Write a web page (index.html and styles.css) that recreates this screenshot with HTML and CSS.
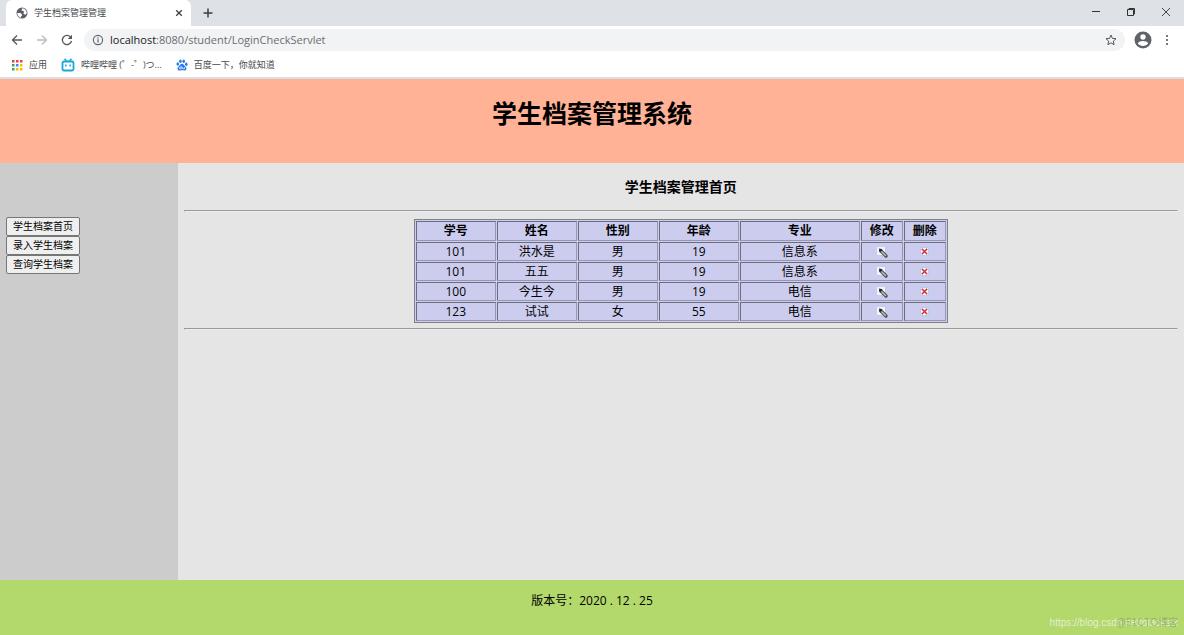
FILE: index.html
```html
<!DOCTYPE html>
<html lang="zh-CN">
<head>
<meta charset="utf-8">
<title>学生档案管理管理</title>
<link rel="stylesheet" href="styles.css">
</head>
<body>
<svg class="defs" aria-hidden="true">
  <symbol id="pencil" viewBox="0 0 12 12"><path d="M1 1h9v9H1z" fill="#edf3ff"/><path d="M1 9.500h8.500V1" fill="none" stroke="#b4cdf2"/><path d="M5 5l5 5" stroke="#444" stroke-width="3.200" stroke-linecap="round"/><path d="M5.500 5.500l4.500 4.500" stroke="#c4c3b4" stroke-width="1.500"/><path d="M3 2.500l3.500.7-3 3z" fill="#222"/></symbol>
  <symbol id="cross" viewBox="0 0 11 11"><path d="M1.500 1.500h8v8h-8z" fill="#f8faff" stroke="#b4cdf2"/><path d="M2.800 2.800l5.400 5.400M8.200 2.800L2.800 8.200" stroke="#d5303a" stroke-width="1.600"/></symbol>
</svg>
<div class="browser">
  <div class="tabs">
    <div class="tab">
      <svg class="icon12" viewBox="0 0 12 12"><circle cx="6" cy="6" r="5.500" fill="#5b5f65"/><path d="M1.300 6h3.200l1.500 1.500v1.200l-1 .5v1.500C3 10.500 1.300 8.500 1.300 6zM6.500 1.300l-.8 1.300v1.200h1.500l1 1.200-1 1.200 1.800 1.500 1-.5.8-1.200C10.700 3.500 9 1.500 6.500 1.300z" fill="#fff"/></svg>
      <span class="tab-title">学生档案管理管理</span>
      <button class="plain" aria-label="关闭标签页"><svg class="icon8" viewBox="0 0 8 8"><path d="M1.200 1.200l5.600 5.600M6.800 1.200L1.200 6.800" stroke="#3c4043" stroke-width="1.300"/></svg></button>
    </div>
    <button class="plain newtab" aria-label="新标签页"><svg class="icon12" viewBox="0 0 12 12"><path d="M6 1.500v9M1.500 6h9" stroke="#3c4043" stroke-width="1.500"/></svg></button>
    <div class="window-buttons">
      <button class="plain" aria-label="最小化"><svg class="icon12" viewBox="0 0 12 12"><path d="M2 5.500h8" stroke="#333"/></svg></button>
      <button class="plain" aria-label="还原"><svg class="icon12" viewBox="0 0 12 12"><path d="M2.500 3.500h6v6h-6zM4 3.500v-1h5.500V8H8.500" fill="none" stroke="#333"/></svg></button>
      <button class="plain" aria-label="关闭"><svg class="icon12" viewBox="0 0 12 12"><path d="M2 2l8 8M10 2l-8 8" stroke="#333" stroke-width=".9"/></svg></button>
    </div>
  </div>
  <div class="toolbar">
    <button class="plain" aria-label="后退"><svg class="icon12" viewBox="0 0 12 12"><path d="M11 6H2M6 1.500L1.500 6 6 10.500" fill="none" stroke="#55595e" stroke-width="1.300"/></svg></button>
    <button class="plain" aria-label="前进"><svg class="icon12" viewBox="0 0 12 12"><path d="M1 6h9M6 1.500L10.500 6 6 10.500" fill="none" stroke="#bbbdc0" stroke-width="1.300"/></svg></button>
    <button class="plain" aria-label="重新加载"><svg class="icon12" viewBox="0 0 12 12"><path d="M9.800 3.400A4.600 4.600 0 1 0 10.500 7" fill="none" stroke="#55595e" stroke-width="1.300"/><path d="M11 .8v4.200H6.800z" fill="#55595e"/></svg></button>
    <div class="address">
      <svg class="icon12" viewBox="0 0 12 12"><circle cx="6" cy="6" r="4.600" fill="none" stroke="#5f6368" stroke-width="1.100"/><path d="M6 5.300v3.200M6 3.200v1.200" stroke="#5f6368" stroke-width="1.200"/></svg>
      <span class="url"><span class="host">localhost</span>:8080/student/LoginCheckServlet</span>
      <button class="plain" aria-label="收藏"><svg class="icon12" viewBox="0 0 12 12"><path d="M6 1l1.400 3.400 3.600.3-2.700 2.400.8 3.600L6 8.800l-3.100 1.900.8-3.600L1 4.700l3.600-.3z" fill="none" stroke="#55595e"/></svg></button>
    </div>
    <button class="plain" aria-label="用户"><svg class="icon18" viewBox="0 0 18 18"><circle cx="9" cy="9" r="8.500" fill="#5f6368"/><circle cx="9" cy="6" r="2.700" fill="#fff"/><path d="M3.800 12.500c1.500-3.200 8.900-3.200 10.400 0-2.200 3.200-8.200 3.200-10.400 0z" fill="#fff"/></svg></button>
    <button class="plain" aria-label="菜单"><svg class="icon12" viewBox="0 0 12 12"><g fill="#55595e"><circle cx="6" cy="2" r="1.100"/><circle cx="6" cy="6" r="1.100"/><circle cx="6" cy="10" r="1.100"/></g></svg></button>
  </div>
  <nav class="bookmarks">
    <a href="#"><svg class="icon12" viewBox="0 0 12 12"><path d="M1 1h2.500v2.500H1zM5 1h2.500v2.500H5zM9 1h2.500v2.500H9z" fill="#ea4335"/><path d="M1 5h2.500v2.500H1z" fill="#34a853"/><path d="M5 5h2.500v2.500H5z" fill="#4285f4"/><path d="M9 5h2.500v2.500H9zM5 9h2.500v2.500H5zM9 9h2.500v2.500H9z" fill="#fbbc05"/><path d="M1 9h2.500v2.500H1z" fill="#34a853"/></svg>应用</a>
    <a href="#"><svg class="icon14" viewBox="0 0 14 14"><rect x="1.500" y="3.500" width="11" height="9" rx="1.500" fill="none" stroke="#18a6dc" stroke-width="1.800"/><path d="M3.500.8L6 3.500M10.500.8L8 3.500M4.800 6.500v2M9.200 6.500v2" stroke="#18a6dc" stroke-width="1.500"/></svg>哔哩哔哩 (゜-゜)つ...</a>
    <a href="#"><svg class="icon12" viewBox="0 0 12 12"><g fill="#2878ee"><ellipse cx="1.800" cy="5" rx="1.300" ry="1.700"/><ellipse cx="4.400" cy="2.200" rx="1.300" ry="1.800"/><ellipse cx="7.700" cy="2.200" rx="1.300" ry="1.800"/><ellipse cx="10.300" cy="5.200" rx="1.300" ry="1.700"/><path d="M6 4.800c1.600 0 2 1.600 3.300 2.600 2.200 1.800 1 4.300-1.200 4.100-1.500-.2-2.700-.2-4.200 0-2.200.2-3.400-2.300-1.200-4.100C4 6.400 4.400 4.800 6 4.800z"/></g><path d="M5.200 7v2.800H4c-1 0-1-1.600 0-1.600h1.200M6.600 8v1.800h2V8" fill="none" stroke="#fff" stroke-width=".7"/></svg>百度一下，你就知道</a>
  </nav>
</div>
<header class="banner"><h1>学生档案管理系统</h1></header>
<div class="middle">
  <aside class="sidebar">
    <button>学生档案首页</button>
    <button>录入学生档案</button>
    <button>查询学生档案</button>
  </aside>
  <main class="content">
    <h3>学生档案管理首页</h3>
    <hr>
    <table class="students">
      <colgroup><col class="std"><col class="std"><col class="std"><col class="std"><col class="major"><col class="act"><col class="act"></colgroup>
      <thead><tr><th>学号</th><th>姓名</th><th>性别</th><th>年龄</th><th>专业</th><th>修改</th><th>删除</th></tr></thead>
      <tbody>
        <tr><td>101</td><td>洪水是</td><td>男</td><td>19</td><td>信息系</td><td><a href="#" aria-label="修改"><svg class="icon12"><use href="#pencil"/></svg></a></td><td><a href="#" aria-label="删除"><svg class="icon11"><use href="#cross"/></svg></a></td></tr>
        <tr><td>101</td><td>五五</td><td>男</td><td>19</td><td>信息系</td><td><a href="#" aria-label="修改"><svg class="icon12"><use href="#pencil"/></svg></a></td><td><a href="#" aria-label="删除"><svg class="icon11"><use href="#cross"/></svg></a></td></tr>
        <tr><td>100</td><td>今生今</td><td>男</td><td>19</td><td>电信</td><td><a href="#" aria-label="修改"><svg class="icon12"><use href="#pencil"/></svg></a></td><td><a href="#" aria-label="删除"><svg class="icon11"><use href="#cross"/></svg></a></td></tr>
        <tr><td>123</td><td>试试</td><td>女</td><td>55</td><td>电信</td><td><a href="#" aria-label="修改"><svg class="icon12"><use href="#pencil"/></svg></a></td><td><a href="#" aria-label="删除"><svg class="icon11"><use href="#cross"/></svg></a></td></tr>
      </tbody>
    </table>
    <hr>
  </main>
</div>
<footer class="footer">
  <p>版本号：2020 . 12 . 25</p>
  <span class="mark">https://blog.csdn.net/blackstx</span>
  <span class="mark mark-dark">@51CTO博客</span>
</footer>
</body>
</html>
```

FILE: styles.css
```css
* { box-sizing: border-box; }
body {
  margin: 0;
  min-height: 100vh;
  display: flex;
  flex-direction: column;
  font: 12px/18px "Open Sans", "Noto Sans CJK SC", sans-serif;
  color: #000;
}
svg { display: block; flex: none; }
.defs { position: absolute; width: 0; height: 0; }
.icon8 { width: 8px; height: 8px; }
.icon11 { width: 11px; height: 11px; }
.icon12 { width: 12px; height: 12px; }
.icon14 { width: 14px; height: 14px; }
.icon18 { width: 18px; height: 18px; }
.plain { border: 0; padding: 0; background: none; }

.browser { background: #fff; border-bottom: 2px solid #dadde1; }
.tabs {
  display: flex;
  align-items: center;
  height: 26px;
  padding-left: 6px;
  background: #dee1e6;
}
.tab {
  display: flex;
  align-items: center;
  gap: 6px;
  align-self: stretch;
  width: 185px;
  padding: 0 8px 0 10px;
  border-radius: 6px 6px 0 0;
  background: #fff;
}
.tab-title { flex: 1; font-size: 9px; color: #45494d; }
.newtab { margin-left: 11px; }
.window-buttons { display: flex; gap: 23px; margin-left: auto; padding: 0 12px 2px 0; }

.toolbar {
  display: flex;
  align-items: center;
  gap: 13px;
  height: 28px;
  padding: 0 11px;
}
.address {
  flex: 1;
  display: flex;
  align-items: center;
  gap: 6px;
  height: 22px;
  margin: 0 -4px 0 -2px;
  padding: 0 8px;
  border-radius: 11px;
  background: #f1f3f4;
}
.url { flex: 1; font-size: 11px; color: #6a6e73; }
.host { color: #202124; }
.toolbar > .plain:last-child { margin-left: -4px; }

.bookmarks {
  display: flex;
  align-items: center;
  gap: 14px;
  height: 23px;
  padding: 0 11px 2px;
}
.bookmarks a {
  display: flex;
  align-items: center;
  gap: 6px;
  font-size: 9px;
  color: #45494d;
  text-decoration: none;
}

.banner { height: 84px; padding-top: 16px; background: #ffb296; text-align: center; }
h1 { margin: 0; font-size: 25px; line-height: 36px; }

.middle { flex: 1; display: flex; }
.sidebar {
  width: 15%;
  padding: 54px 6px 0;
  display: flex;
  flex-direction: column;
  align-items: flex-start;
  background: #ccc;
}
.sidebar button {
  height: 19px;
  padding: 0 6px 2px;
  border: 1px solid #767676;
  border-radius: 2px;
  background: #efefef;
  font: 10px/15px "Noto Sans CJK SC", sans-serif;
  color: #000;
}
.content { flex: 1; padding: 14px 6px 0; background: #e5e5e5; }
h3 { margin: 0 0 13px; font-size: 14px; line-height: 20px; text-align: center; }
hr { margin: 0; height: 2px; border: 1px solid; border-color: #9a9a9a #eee #eee #9a9a9a; }
.students {
  table-layout: fixed;
  width: 534px;
  margin: 7px auto 5px;
  border: 1px solid #808088;
  border-spacing: 1px;
  background: #cccdee;
  text-align: center;
}
.std { width: 80px; }
.major { width: 120px; }
.act { width: 42px; }
.students th, .students td {
  height: 19px;
  padding: 0;
  border: 1px solid;
  border-color: #6c6c80 #9797ae #9797ae #6c6c80;
  line-height: 17px;
}
.students th { height: 20px; line-height: 18px; }
.students svg { margin: 0 auto; }

.footer { position: relative; height: 55px; padding-top: 12px; background: #b3d86c; text-align: center; }
.footer p { margin: 0; }
.mark {
  position: absolute;
  right: 6px;
  bottom: 3px;
  font: 10px/18px "Liberation Sans", "Noto Sans CJK SC", sans-serif;
  color: rgba(255, 255, 255, .65);
}
.mark-dark { color: rgba(110, 125, 90, .45); }
```
